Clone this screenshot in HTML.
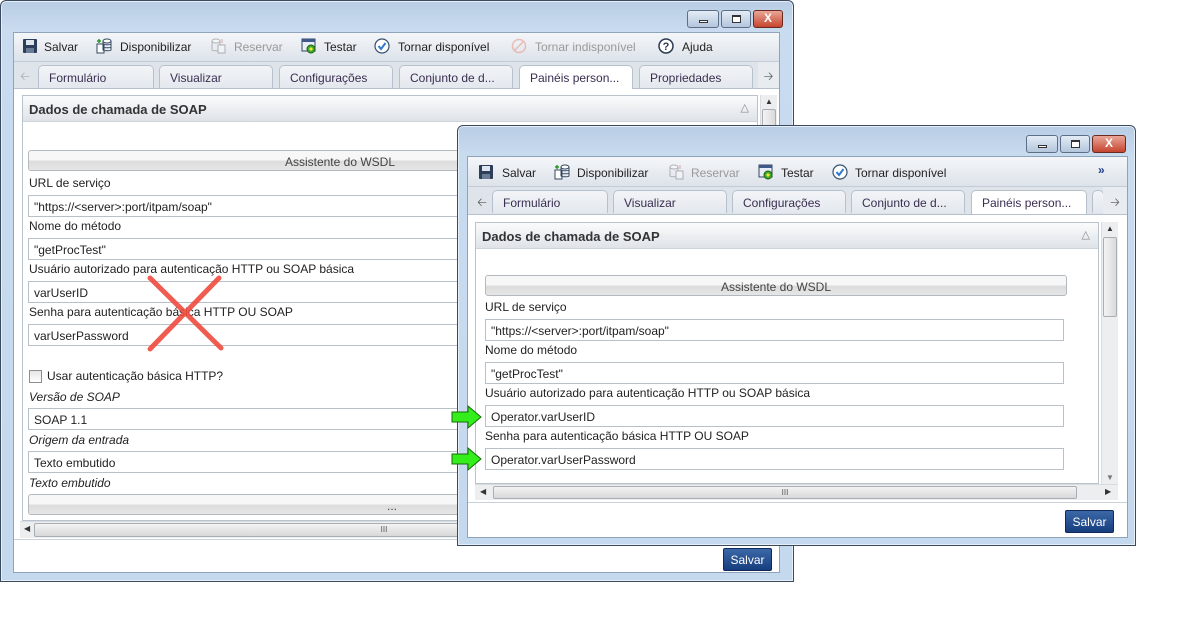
<!DOCTYPE html>
<html><head><meta charset="utf-8"><style>
*{box-sizing:border-box;margin:0;padding:0}
body{width:1188px;height:627px;background:#fff;position:relative;overflow:hidden;font-family:"Liberation Sans","DejaVu Sans",sans-serif;font-size:12px;color:#222}
.a{position:absolute}
.frame{position:absolute;border:1px solid #3b4a5c;border-radius:6px 6px 0 0;background:linear-gradient(#b8cde4,#c9dbef 30px,#c4d8ee);box-shadow:inset 0 0 0 1px #e6eef8}
.client{position:absolute;background:#fff;border:1px solid #8fa3ba}
.tb{position:absolute;background:linear-gradient(#f4f6f9,#dde3ea);border-bottom:1px solid #c5ccd5}
.tbi{position:absolute;top:7px;font-size:12px;color:#222;white-space:nowrap}
.dis{color:#999}
.tabs{position:absolute;background:#dfe4ea}
.tab{position:absolute;top:3px;height:23px;border:1px solid #b7c1cd;border-bottom:none;border-radius:5px 5px 0 0;background:linear-gradient(#f2f4f7,#e3e8ee);padding:5px 0 0 10px;color:#3a2e50;white-space:nowrap;overflow:hidden}
.tab.sel{background:#fff;height:24px}
.pnl{position:absolute;border:1px solid #b9c3ce;background:#fff}
.ph{position:absolute;left:0;right:0;top:0;height:26px;background:linear-gradient(#fafbfc,#dfe3e8);border-bottom:1px solid #ccd3db;font-weight:bold;font-size:13px;color:#333;padding:6px 0 0 6px}
.lbl{position:absolute;white-space:nowrap;font-size:12px;color:#222}
.it{font-style:italic}
.fld{position:absolute;height:22px;border:1px solid #b8c0ca;background:#fff;padding:4px 0 0 5px;white-space:nowrap;overflow:hidden}
.btn{position:absolute;height:21px;border:1px solid #b4b9c0;border-radius:3px;background:linear-gradient(#f7f7f7 45%,#dcdcdc 55%,#e6e6e6);text-align:center;padding-top:4px;color:#444;overflow:hidden;white-space:nowrap}
.vs{position:absolute;background:#eceef0;border-left:1px solid #d8dcdf}
.hs{position:absolute;background:#eceef0;border-top:1px solid #d8dcdf}
.thumb{position:absolute;border:1px solid #a9aeb4;border-radius:2px;background:linear-gradient(90deg,#f3f3f3,#dadada)}
.thumbh{position:absolute;border:1px solid #a9aeb4;border-radius:2px;background:linear-gradient(#f3f3f3,#d8d8d8)}
.wb{position:absolute;top:10px;height:18px;border:1px solid #5d6f86;border-radius:3px;background:linear-gradient(#e3ecf6,#b4c6dc)}
.wbx{background:linear-gradient(#e9a697,#c6452f);border-color:#6b2a20}
.sv{position:absolute;width:49px;height:23px;border:1px solid #0f2a5a;border-radius:2px;background:linear-gradient(#3c68a8,#163e7e);color:#fff;font-size:12px;text-align:center;padding-top:4px}
.ic{position:absolute;top:5px;width:16px;height:16px}
</style></head><body>

<!-- WINDOW 1 -->
<div class="frame" style="left:0;top:0;width:794px;height:582px"></div>
<div class="wb" style="left:687px;width:32px"><div class="a" style="left:11px;top:9px;width:9px;height:3px;border:1px solid #333;background:#fff"></div></div>
<div class="wb" style="left:721px;width:30px"><div class="a" style="left:10px;top:4px;width:9px;height:8px;border:1px solid #333;border-top-width:2px;background:#fff"></div></div>
<div class="wb wbx" style="left:753px;width:30px;color:#fff;font-weight:bold;text-align:center;font-size:12px;line-height:15px">X</div>
<div class="client" style="left:13px;top:32px;width:767px;height:541px"></div>
<div class="tb" style="left:14px;top:33px;width:765px;height:29px">
  <svg class="ic" style="left:8px" viewBox="0 0 16 16"><rect x="1" y="1" width="14" height="14" rx="1" fill="#2c3e58"/><rect x="4" y="2" width="8" height="5" fill="#dfe6ef"/><rect x="4" y="10" width="8" height="5" fill="#6a7c94"/></svg>
  <span class="tbi" style="left:30px">Salvar</span>
  <svg class="ic" style="left:82px" viewBox="0 0 16 16"><rect x="1" y="6" width="7" height="9" fill="#fff" stroke="#33475f"/><ellipse cx="11" cy="3" rx="4" ry="2" fill="#fff" stroke="#33475f"/><path d="M7 3v9c0 1 8 1 8 0V3M7 6c0 1 8 1 8 0M7 9c0 1 8 1 8 0" fill="none" stroke="#33475f"/><path d="M3 1v4M1 3h4" stroke="#2a9a2a" stroke-width="1.5"/></svg>
  <span class="tbi" style="left:106px">Disponibilizar</span>
  <svg class="ic" style="left:196px;opacity:.4" viewBox="0 0 16 16"><ellipse cx="6" cy="3" rx="4" ry="2" fill="#fff" stroke="#555"/><path d="M2 3v9c0 1 8 1 8 0V3" fill="none" stroke="#555"/><rect x="8" y="7" width="7" height="8" fill="#fff" stroke="#555"/><path d="M12 1v4" stroke="#c33"/></svg>
  <span class="tbi dis" style="left:220px">Reservar</span>
  <svg class="ic" style="left:287px" viewBox="0 0 16 16"><rect x="1" y="1" width="13" height="12" fill="#e8eef8" stroke="#33475f"/><rect x="1" y="1" width="13" height="3" fill="#3d5a8a"/><circle cx="10" cy="11" r="4" fill="#3fae2a" stroke="#1f5a12"/><path d="M8 11l2-2 2 2-2 2z" fill="#f3e23a"/></svg>
  <span class="tbi" style="left:310px">Testar</span>
  <svg class="ic" style="left:360px" viewBox="0 0 16 16"><circle cx="8" cy="8" r="7" fill="#fff" stroke="#34506e" stroke-width="1.2"/><path d="M4.5 8l2.5 3 4.5-6" fill="none" stroke="#2f78d0" stroke-width="2"/></svg>
  <span class="tbi" style="left:384px">Tornar disponível</span>
  <svg class="ic" style="left:497px;opacity:.5" viewBox="0 0 16 16"><circle cx="8" cy="8" r="6.5" fill="none" stroke="#e78a7c" stroke-width="1.5"/><path d="M3.5 12.5l9-9" stroke="#e78a7c" stroke-width="1.5"/></svg>
  <span class="tbi dis" style="left:521px">Tornar indisponível</span>
  <svg class="ic" style="left:644px" viewBox="0 0 16 16"><circle cx="8" cy="8" r="7" fill="#fff" stroke="#2b3a52" stroke-width="1.5"/><text x="8" y="12" font-size="11" font-weight="bold" text-anchor="middle" fill="#2b3a52" font-family="Liberation Sans">?</text></svg>
  <span class="tbi" style="left:668px">Ajuda</span>
</div>
<div class="tabs" style="left:14px;top:62px;width:765px;height:27px;border-bottom:1px solid #b7c1cd">
  <div class="a" style="left:0;top:0;width:22px;height:26px;color:#aaa;text-align:center;padding-top:5px">&#129120;</div>
  <div class="tab" style="left:24px;width:116px">Formulário</div>
  <div class="tab" style="left:145px;width:114px">Visualizar</div>
  <div class="tab" style="left:265px;width:114px">Configurações</div>
  <div class="tab" style="left:385px;width:114px">Conjunto de d...</div>
  <div class="tab sel" style="left:505px;width:114px">Painéis person...</div>
  <div class="tab" style="left:625px;width:114px">Propriedades</div>
  <div class="a" style="left:744px;top:0;width:21px;height:26px;color:#555;text-align:center;padding-top:5px;background:#e8ebef">&#129122;</div>
</div>
<div class="pnl" style="left:22px;top:95px;width:736px;height:426px">
  <div class="ph">Dados de chamada de SOAP<span class="a" style="right:8px;top:5px;font-weight:normal;color:#888;font-size:11px">△</span></div>
</div>
<div class="btn" style="left:28px;top:150px;width:440px;text-align:right;padding-right:72px">Assistente do WSDL</div>
<div class="lbl" style="left:29px;top:176px">URL de serviço</div>
<div class="fld" style="left:28px;top:195px;width:440px">"https://&lt;server&gt;:port/itpam/soap"</div>
<div class="lbl" style="left:29px;top:219px">Nome do método</div>
<div class="fld" style="left:28px;top:238px;width:440px">"getProcTest"</div>
<div class="lbl" style="left:29px;top:262px">Usuário autorizado para autenticação HTTP ou SOAP básica</div>
<div class="fld" style="left:28px;top:281px;width:440px">varUserID</div>
<div class="lbl" style="left:29px;top:305px">Senha para autenticação básica HTTP OU SOAP</div>
<div class="fld" style="left:28px;top:324px;width:440px">varUserPassword</div>
<div class="a" style="left:29px;top:370px;width:13px;height:13px;border:1px solid #8a8f96;background:linear-gradient(#e6e6e6,#fff)"></div>
<div class="lbl" style="left:47px;top:369px">Usar autenticação básica HTTP?</div>
<div class="lbl it" style="left:29px;top:390px">Versão de SOAP</div>
<div class="fld" style="left:28px;top:408px;width:440px">SOAP 1.1</div>
<div class="lbl it" style="left:29px;top:433px">Origem da entrada</div>
<div class="fld" style="left:28px;top:451px;width:440px">Texto embutido</div>
<div class="lbl it" style="left:29px;top:476px">Texto embutido</div>
<div class="btn" style="left:28px;top:494px;width:440px;text-align:right;padding-right:70px">...</div>
<div class="vs" style="left:760px;top:95px;width:17px;height:426px"><div class="a" style="left:4px;top:2px;font-size:8px;color:#333">▲</div><div class="thumb" style="left:1px;top:14px;width:14px;height:60px"></div></div>
<div class="hs" style="left:20px;top:521px;width:740px;height:17px"><div class="a" style="left:4px;top:2px;font-size:8px;color:#333">◀</div><div class="thumbh" style="left:14px;top:1px;width:700px;height:14px;text-align:center;font-size:8px;color:#555;line-height:12px">III</div></div>
<div class="a" style="left:14px;top:539px;width:765px;height:1px;background:#c8d0d8"></div>
<div class="sv" style="left:723px;top:548px">Salvar</div>

<!-- red X -->
<svg class="a" style="left:140px;top:270px" width="90" height="90" viewBox="0 0 90 90"><path d="M10 8L81 78M79 8L10 79" stroke="#f04a3e" stroke-opacity=".9" stroke-width="5" stroke-linecap="round"/></svg>

<!-- WINDOW 2 -->
<div class="frame" style="left:457px;top:125px;width:679px;height:421px"></div>
<div class="wb" style="left:1026px;top:135px;width:32px"><div class="a" style="left:11px;top:9px;width:9px;height:3px;border:1px solid #333;background:#fff"></div></div>
<div class="wb" style="left:1060px;top:135px;width:30px"><div class="a" style="left:10px;top:4px;width:9px;height:8px;border:1px solid #333;border-top-width:2px;background:#fff"></div></div>
<div class="wb wbx" style="left:1092px;top:135px;width:34px;color:#fff;font-weight:bold;text-align:center;font-size:12px;line-height:15px">X</div>
<div class="client" style="left:467px;top:156px;width:661px;height:382px"></div>
<div class="tb" style="left:468px;top:157px;width:659px;height:30px">
  <svg class="ic" style="left:10px;top:7px" viewBox="0 0 16 16"><rect x="1" y="1" width="14" height="14" rx="1" fill="#2c3e58"/><rect x="4" y="2" width="8" height="5" fill="#dfe6ef"/><rect x="4" y="10" width="8" height="5" fill="#6a7c94"/></svg>
  <span class="tbi" style="left:34px;top:9px">Salvar</span>
  <svg class="ic" style="left:86px;top:7px" viewBox="0 0 16 16"><rect x="1" y="6" width="7" height="9" fill="#fff" stroke="#33475f"/><ellipse cx="11" cy="3" rx="4" ry="2" fill="#fff" stroke="#33475f"/><path d="M7 3v9c0 1 8 1 8 0V3M7 6c0 1 8 1 8 0M7 9c0 1 8 1 8 0" fill="none" stroke="#33475f"/><path d="M3 1v4M1 3h4" stroke="#2a9a2a" stroke-width="1.5"/></svg>
  <span class="tbi" style="left:109px;top:9px">Disponibilizar</span>
  <svg class="ic" style="left:200px;top:7px;opacity:.4" viewBox="0 0 16 16"><ellipse cx="6" cy="3" rx="4" ry="2" fill="#fff" stroke="#555"/><path d="M2 3v9c0 1 8 1 8 0V3" fill="none" stroke="#555"/><rect x="8" y="7" width="7" height="8" fill="#fff" stroke="#555"/><path d="M12 1v4" stroke="#c33"/></svg>
  <span class="tbi dis" style="left:223px;top:9px">Reservar</span>
  <svg class="ic" style="left:290px;top:7px" viewBox="0 0 16 16"><rect x="1" y="1" width="13" height="12" fill="#e8eef8" stroke="#33475f"/><rect x="1" y="1" width="13" height="3" fill="#3d5a8a"/><circle cx="10" cy="11" r="4" fill="#3fae2a" stroke="#1f5a12"/><path d="M8 11l2-2 2 2-2 2z" fill="#f3e23a"/></svg>
  <span class="tbi" style="left:313px;top:9px">Testar</span>
  <svg class="ic" style="left:364px;top:7px" viewBox="0 0 16 16"><circle cx="8" cy="8" r="7" fill="#fff" stroke="#34506e" stroke-width="1.2"/><path d="M4.5 8l2.5 3 4.5-6" fill="none" stroke="#2f78d0" stroke-width="2"/></svg>
  <span class="tbi" style="left:387px;top:9px">Tornar disponível</span>
  <span class="tbi" style="left:630px;top:6px;color:#1f3f8a;font-weight:bold">»</span>
</div>
<div class="tabs" style="left:468px;top:187px;width:659px;height:28px;border-bottom:1px solid #b7c1cd">
  <div class="a" style="left:4px;top:0;width:20px;height:27px;color:#555;text-align:center;padding-top:6px">&#129120;</div>
  <div class="tab" style="left:24px;width:116px">Formulário</div>
  <div class="tab" style="left:145px;width:114px">Visualizar</div>
  <div class="tab" style="left:264px;width:114px">Configurações</div>
  <div class="tab" style="left:383px;width:114px">Conjunto de d...</div>
  <div class="tab sel" style="left:503px;width:116px">Painéis person...</div>
  <div class="tab" style="left:624px;width:10px"></div>
  <div class="a" style="left:635px;top:0;width:24px;height:27px;color:#555;text-align:center;padding-top:6px;background:#e8ebef">&#129122;</div>
</div>
<div class="pnl" style="left:475px;top:222px;width:624px;height:262px">
  <div class="ph">Dados de chamada de SOAP<span class="a" style="right:8px;top:5px;font-weight:normal;color:#888;font-size:11px">△</span></div>
</div>
<div class="btn" style="left:485px;top:275px;width:582px">Assistente do WSDL</div>
<div class="lbl" style="left:485px;top:300px">URL de serviço</div>
<div class="fld" style="left:485px;top:319px;width:579px">"https://&lt;server&gt;:port/itpam/soap"</div>
<div class="lbl" style="left:485px;top:343px">Nome do método</div>
<div class="fld" style="left:485px;top:362px;width:579px">"getProcTest"</div>
<div class="lbl" style="left:485px;top:386px">Usuário autorizado para autenticação HTTP ou SOAP básica</div>
<div class="fld" style="left:485px;top:405px;width:579px">Operator.varUserID</div>
<div class="lbl" style="left:485px;top:429px">Senha para autenticação básica HTTP OU SOAP</div>
<div class="fld" style="left:485px;top:448px;width:579px">Operator.varUserPassword</div>
<div class="vs" style="left:1101px;top:222px;width:17px;height:262px"><div class="a" style="left:4px;top:2px;font-size:8px;color:#333">▲</div><div class="thumb" style="left:1px;top:15px;width:14px;height:80px"></div><div class="a" style="left:4px;bottom:2px;font-size:8px;color:#777">▼</div></div>
<div class="hs" style="left:475px;top:484px;width:643px;height:16px"><div class="a" style="left:5px;top:2px;font-size:8px;color:#333">◀</div><div class="thumbh" style="left:18px;top:1px;width:584px;height:13px;text-align:center;font-size:8px;color:#555;line-height:11px">III</div><div class="a" style="left:630px;top:2px;font-size:8px;color:#333">▶</div></div>
<div class="a" style="left:468px;top:502px;width:659px;height:1px;background:#c8d0d8"></div>
<div class="sv" style="left:1065px;top:510px">Salvar</div>

<!-- green arrows -->
<svg class="a" style="left:451px;top:405px" width="32" height="24" viewBox="0 0 32 24"><path d="M1 7h16V1l13 11-13 11v-6H1z" fill="#33ee1a" stroke="#176b0c" stroke-width="1"/></svg>
<svg class="a" style="left:451px;top:447px" width="32" height="24" viewBox="0 0 32 24"><path d="M1 7h16V1l13 11-13 11v-6H1z" fill="#33ee1a" stroke="#176b0c" stroke-width="1"/></svg>
</body></html>
